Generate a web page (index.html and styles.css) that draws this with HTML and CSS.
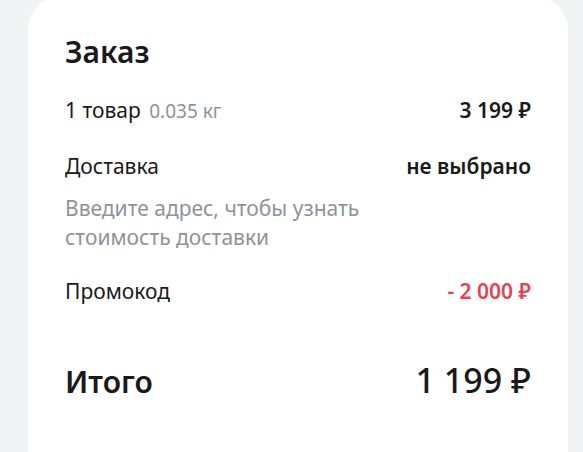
FILE: index.html
```html
<!DOCTYPE html>
<html lang="ru">
<head>
<meta charset="utf-8">
<link rel="stylesheet" href="styles.css">
</head>
<body>
<div class="card">
  <h2 class="title">Заказ</h2>
  <div class="row row-items">
    <span class="label">1 товар <span class="weight">0.035 кг</span></span>
    <span class="value">3 199 ₽</span>
  </div>
  <div class="row row-delivery">
    <span class="label">Доставка</span>
    <span class="value">не выбрано</span>
  </div>
  <p class="hint">Введите адрес, чтобы узнать<br>стоимость доставки</p>
  <div class="row row-promo">
    <span class="label">Промокод</span>
    <span class="value discount">- 2 000 ₽</span>
  </div>
  <div class="row total">
    <span class="total-label">Итого</span>
    <span class="total-value">1 199 ₽</span>
  </div>
</div>
</body>
</html>
```
FILE: styles.css
```css
html, body {
  margin: 0;
  padding: 0;
  background: #f2f3f5;
  height: 100%;
  overflow: hidden;
}
body {
  font-family: "Noto Sans", "DejaVu Sans", sans-serif;
  color: #1a1a1a;
}
.card {
  margin: -4px 0 0 28px;
  width: 540px;
  box-sizing: border-box;
  background: #fff;
  border-radius: 34px;
  padding: 38px 37px 60px 37px;
  min-height: 520px;
}
.title {
  margin: 0;
  font-size: 30px;
  line-height: 36px;
  font-weight: 600;
}
.row {
  display: flex;
  justify-content: space-between;
  align-items: baseline;
  font-size: 21px;
  line-height: 28px;
}
.row-items { margin-top: 26px; }
.row-delivery { margin-top: 27px; }
.row-promo { margin-top: 25px; }
.weight {
  color: #8f9399;
  font-size: 19px;
  margin-left: 3px;
}
.value { font-weight: 600; font-size: 21px; }
.discount { color: #e6434f; }
.hint {
  margin: 14px 0 0 0;
  font-size: 21px;
  line-height: 29px;
  color: #8f9399;
}
.total {
  margin-top: 55px;
  line-height: 40px;
}
.total-label {
  font-size: 30px;
  font-weight: 600;
}
.total-value {
  font-size: 34px;
  font-weight: 500;
}
```
